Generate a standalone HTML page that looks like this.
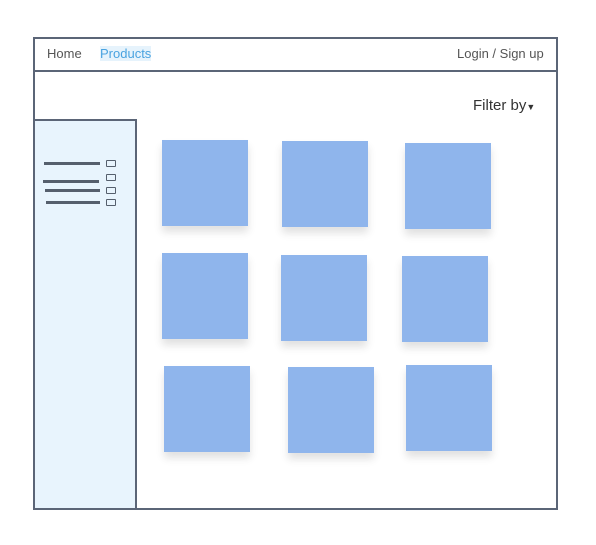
<!DOCTYPE html><html><head><style>
body{margin:0;width:596px;height:545px;background:#fff;position:relative;font-family:"Liberation Sans",sans-serif;overflow:hidden}
.a{position:absolute}
.sq{position:absolute;width:86px;height:86px;background:#8fb5ec;box-shadow:0 6px 8px rgba(0,0,0,.12)}
.ln{position:absolute;height:3px;background:#555f6d}
.bx{position:absolute;width:8px;height:5px;border:1.5px solid #555f6d;border-radius:1px}
</style></head><body>
<div class="a" style="left:33px;top:37px;width:521px;height:469px;border:2px solid #5b6577"></div>
<div class="a" style="left:33px;top:70px;width:523px;height:2px;background:#5b6577"></div>
<div class="a" style="left:47px;top:46px;font-size:13px;color:#555">Home</div>
<div class="a" style="left:100px;top:46px;font-size:13px;color:#4aa3e0;background:#e6f3fc">Products</div>
<div class="a" style="left:457px;top:46px;font-size:13px;color:#555">Login / Sign up</div>
<div class="a" style="left:473px;top:97px;font-size:15px;color:#333">Filter by<span style="font-size:9px">▼</span></div>
<div class="a" style="left:33px;top:119px;width:100px;height:387px;background:#e8f4fd;border:2px solid #5b6577"></div>
<div class="ln" style="left:44px;top:162px;width:56px"></div><div class="bx" style="left:106px;top:160px"></div>
<div class="bx" style="left:106px;top:174px"></div>
<div class="ln" style="left:43px;top:180px;width:56px"></div>
<div class="ln" style="left:45px;top:189px;width:55px"></div><div class="bx" style="left:106px;top:187px"></div>
<div class="ln" style="left:46px;top:201px;width:54px"></div><div class="bx" style="left:106px;top:199px"></div>
<div class="sq" style="left:162px;top:140px"></div>
<div class="sq" style="left:282px;top:141px"></div>
<div class="sq" style="left:405px;top:143px"></div>
<div class="sq" style="left:162px;top:253px"></div>
<div class="sq" style="left:281px;top:255px"></div>
<div class="sq" style="left:402px;top:256px"></div>
<div class="sq" style="left:164px;top:366px"></div>
<div class="sq" style="left:288px;top:367px"></div>
<div class="sq" style="left:406px;top:365px"></div>
</body></html>
